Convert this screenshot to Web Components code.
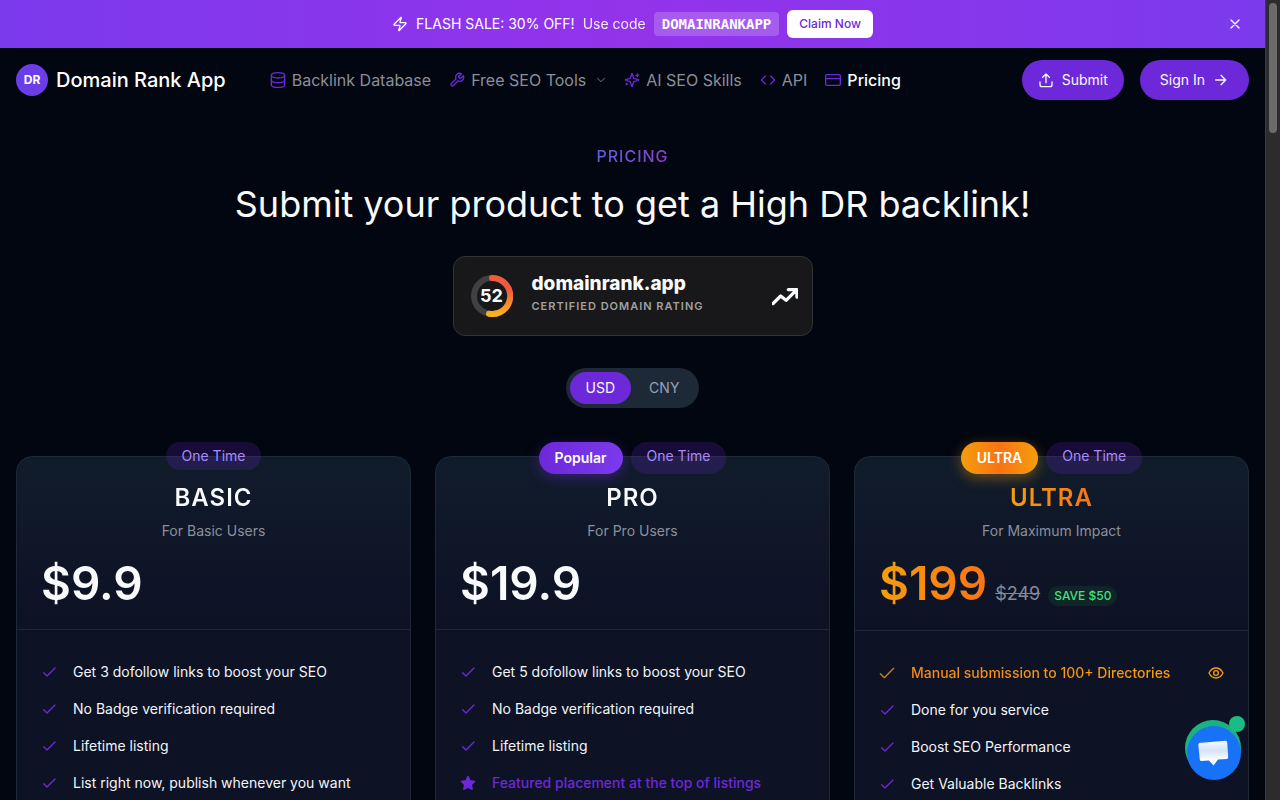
<!DOCTYPE html>
<html lang="en">
<head>
<meta charset="utf-8">
<meta name="viewport" content="width=device-width, initial-scale=1">
<title>Pricing - Domain Rank App</title>
<style>
    body {
        margin: 0;
        height: 100vh;
        overflow: hidden;
        background: #020610;
        color: #f8fafc;
        font-family: Inter, "Liberation Sans", sans-serif;
        font-size: 14px;
        line-height: 20px;
    }
</style>
</head>
<body>
<page-shell>
    <sale-banner code="DOMAINRANKAPP">FLASH SALE: 30% OFF!</sale-banner>
    <site-header></site-header>
    <main>
        <pricing-hero></pricing-hero>
        <plan-grid>
            <plan-card name="BASIC" tagline="For Basic Users" price="$9.9">
                <plan-feature>Get 3 dofollow links to boost your SEO</plan-feature>
                <plan-feature>No Badge verification required</plan-feature>
                <plan-feature>Lifetime listing</plan-feature>
                <plan-feature>List right now, publish whenever you want</plan-feature>
            </plan-card>
            <plan-card name="PRO" tagline="For Pro Users" price="$19.9" badge="Popular">
                <plan-feature>Get 5 dofollow links to boost your SEO</plan-feature>
                <plan-feature>No Badge verification required</plan-feature>
                <plan-feature>Lifetime listing</plan-feature>
                <plan-feature kind="star">Featured placement at the top of listings</plan-feature>
            </plan-card>
            <plan-card variant="ultra" name="ULTRA" tagline="For Maximum Impact" price="$199" was="$249" save="SAVE $50" badge="ULTRA">
                <plan-feature kind="gold">Manual submission to 100+ Directories</plan-feature>
                <plan-feature>Done for you service</plan-feature>
                <plan-feature>Boost SEO Performance</plan-feature>
                <plan-feature>Get Valuable Backlinks</plan-feature>
            </plan-card>
        </plan-grid>
    </main>
    <chat-bubble slot="overlay"></chat-bubble>
</page-shell>

<script>
const ICONS = {
    bolt: '<path d="M4 14a1 1 0 0 1-.78-1.63l9.9-10.2a.5.5 0 0 1 .86.46l-1.92 6.02A1 1 0 0 0 13 10h7a1 1 0 0 1 .78 1.63l-9.9 10.2a.5.5 0 0 1-.86-.46l1.92-6.02A1 1 0 0 0 11 14z"/>',
    close: '<path d="M18 6 6 18M6 6l12 12"/>',
    database: '<ellipse cx="12" cy="5" rx="10" ry="4"/><path d="M2 5v14a10 4 0 0 0 20 0V5"/><path d="M2 12a10 4 0 0 0 20 0"/>',
    wrench: '<path d="M14.7 6.3a1 1 0 0 0 0 1.4l1.6 1.6a1 1 0 0 0 1.4 0l3.77-3.77a6 6 0 0 1-7.94 7.94l-6.91 6.91a2.12 2.12 0 0 1-3-3l6.91-6.91a6 6 0 0 1 7.94-7.94z"/>',
    sparkles: '<path d="M9.94 15.5A2 2 0 0 0 8.5 14.06l-6.14-1.58a.5.5 0 0 1 0-.96L8.5 9.94A2 2 0 0 0 9.94 8.5l1.58-6.14a.5.5 0 0 1 .96 0l1.58 6.14a2 2 0 0 0 1.44 1.44l6.14 1.58a.5.5 0 0 1 0 .96l-6.14 1.58a2 2 0 0 0-1.44 1.44l-1.58 6.14a.5.5 0 0 1-.96 0z"/><path d="M20 3v4M22 5h-4M4 17v2M5 18H3"/>',
    code: '<path d="m16 18 6-6-6-6M8 6l-6 6 6 6"/>',
    card: '<rect x="1" y="4" width="22" height="16" rx="2"/><path d="M1 10h22"/>',
    chevron: '<path d="m4 8 8 8 8-8"/>',
    upload: '<path d="M3 15v4a3 3 0 0 0 3 3h12a3 3 0 0 0 3-3v-4M12 16V3M7 8l5-5 5 5"/>',
    arrow: '<path d="M4 12h15M12 5l7 7-7 7"/>',
    trend: '<path d="m1 19 7-7 5 4 9-9M15 6h8v7"/>',
    check: '<path d="m4 13 5 5L21 6"/>',
    tick: '<path d="m2 13 6 6L22 5"/>',
    star: '<path fill="currentColor" d="m12 2 3.1 6.6 7 .9-5.1 5 1.3 7.1-6.3-3.4-6.3 3.4L7 14.5l-5.1-5 7-.9z"/>',
    eye: '<path d="M1.500 12C4 7 7.500 4.500 12 4.500S20 7 22.500 12C20 17 16.500 19.500 12 19.500S4 17 1.500 12z"/><circle cx="12" cy="12" r="3.500"/>'
};

// small helper so that every element gets an open root with its own styles
function render(el, html) {
    el.attachShadow({ mode: 'open' }).innerHTML = html;
}

class UiIcon extends HTMLElement {
    connectedCallback() {
        const size = this.getAttribute('size') || 16;
        const weight = this.getAttribute('weight') || 2;
        render(this, `
            <style>
                :host { display: inline-flex; flex: none; }
                svg { display: block; fill: none; stroke: currentColor; stroke-linecap: round; stroke-linejoin: round; }
            </style>
            <svg width="${size}" height="${size}" viewBox="0 0 24 24" stroke-width="${weight}" aria-hidden="true">${ICONS[this.getAttribute('name')]}</svg>
        `);
    }
}

class PageShell extends HTMLElement {
    connectedCallback() {
        render(this, `
            <style>
                :host {
                    display: grid;
                    grid-template-columns: minmax(0, 1fr) 15px;
                    height: 100vh;
                }
                .view { overflow-y: auto; scrollbar-width: none; }
                .track {
                    box-sizing: border-box;
                    padding: 3px;
                    background: #2c2c2c;
                    border-left: 1px solid #3d3d3d;
                }
                .thumb {
                    width: 8px;
                    height: 130px;
                    border-radius: 4px;
                    background: #6b6b6b;
                }
            </style>
            <div class="view"><slot></slot></div>
            <div class="track"><div class="thumb"></div></div>
            <slot name="overlay"></slot>
        `);
    }
}

class SaleBanner extends HTMLElement {
    connectedCallback() {
        render(this, `
            <style>
                :host {
                    display: grid;
                    grid-template-columns: 28px 1fr 28px;
                    align-items: center;
                    height: 48px;
                    padding: 0 16px;
                    background: linear-gradient(90deg, #7c3aed, #9333ea 50%, #7c3aed);
                    color: #fff;
                }
                .offer { display: flex; grid-column: 2; align-items: center; justify-content: center; gap: 8px; }
                .use { opacity: 0.9; }
                code {
                    padding: 2px 8px;
                    border-radius: 4px;
                    background: rgba(255, 255, 255, 0.2);
                    font: bold 14px/20px "DejaVu Sans Mono", monospace;
                }
                button { border: 0; cursor: pointer; font: inherit; }
                .claim {
                    padding: 4px 12px;
                    border-radius: 6px;
                    background: #fff;
                    color: #6d28d9;
                    font-size: 12px;
                    font-weight: 500;
                }
                .close { display: flex; justify-content: center; padding: 6px; background: none; color: #fff; }
            </style>
            <div class="offer">
                <ui-icon name="bolt"></ui-icon>
                <span><slot></slot></span>
                <span class="use">Use code</span>
                <code>${this.getAttribute('code')}</code>
                <button class="claim" type="button">Claim Now</button>
            </div>
            <button class="close" type="button" aria-label="Close"><ui-icon name="close"></ui-icon></button>
        `);
    }
}

class NavLink extends HTMLElement {
    connectedCallback() {
        const menu = this.hasAttribute('menu') ? '<ui-icon class="more" name="chevron" size="10"></ui-icon>' : '';
        render(this, `
            <style>
                :host { display: block; }
                a {
                    display: flex;
                    align-items: center;
                    gap: 6px;
                    color: #8b8f99;
                    font-size: 16px;
                    line-height: 24px;
                    text-decoration: none;
                    white-space: nowrap;
                }
                :host([active]) a { color: #fff; font-weight: 500; }
                .lead { color: #6d28d9; }
                .more { margin-left: 4px; }
            </style>
            <a href="#"><ui-icon class="lead" name="${this.getAttribute('icon')}"></ui-icon><slot></slot>${menu}</a>
        `);
    }
}

class PillButton extends HTMLElement {
    connectedCallback() {
        render(this, `
            <style>
                :host { display: block; }
                button {
                    display: flex;
                    align-items: center;
                    gap: 8px;
                    height: 40px;
                    padding: 0 16px;
                    border: 0;
                    border-radius: 20px;
                    background: #6d28d9;
                    color: #f8fafc;
                    font: inherit;
                    white-space: nowrap;
                    cursor: pointer;
                }
                :host([wide]) button { padding: 0 20px; }
            </style>
            <button type="button"><slot></slot></button>
        `);
    }
}

class SiteHeader extends HTMLElement {
    connectedCallback() {
        render(this, `
            <style>
                :host {
                    display: flex;
                    align-items: center;
                    height: 64px;
                    padding: 0 16px;
                }
                .brand {
                    display: flex;
                    align-items: center;
                    gap: 8px;
                    color: #fff;
                    font-size: 20px;
                    font-weight: 500;
                    line-height: 28px;
                    text-decoration: none;
                    white-space: nowrap;
                }
                .mark {
                    width: 32px;
                    border-radius: 50%;
                    background: #6a3de8;
                    font-size: 12px;
                    font-weight: 700;
                    line-height: 32px;
                    text-align: center;
                }
                nav { display: flex; gap: 18px; margin-left: 44px; }
                .actions { display: flex; gap: 16px; margin-left: auto; }
            </style>
            <a class="brand" href="#"><span class="mark">DR</span><span>Domain Rank App</span></a>
            <nav>
                <nav-link icon="database">Backlink Database</nav-link>
                <nav-link icon="wrench" menu>Free SEO Tools</nav-link>
                <nav-link icon="sparkles">AI SEO Skills</nav-link>
                <nav-link icon="code">API</nav-link>
                <nav-link icon="card" active>Pricing</nav-link>
            </nav>
            <div class="actions">
                <pill-button><ui-icon name="upload"></ui-icon><span>Submit</span></pill-button>
                <pill-button wide><span>Sign In</span><ui-icon name="arrow"></ui-icon></pill-button>
            </div>
        `);
    }
}

class RatingBadge extends HTMLElement {
    connectedCallback() {
        render(this, `
            <style>
                :host {
                    display: flex;
                    align-items: center;
                    gap: 19px;
                    box-sizing: border-box;
                    width: 360px;
                    height: 80px;
                    padding: 0 14px 0 17px;
                    border: 1px solid #333;
                    border-radius: 12px;
                    background: #18181a;
                }
                .ring { display: grid; place-items: center; }
                .ring > * { grid-area: 1 / 1; }
                .score { font-size: 18px; font-weight: 700; }
                .text { flex: 1; padding-bottom: 4px; text-align: left; }
                .domain { font-size: 19px; font-weight: 800; line-height: 24px; }
                .label { color: #a1a1a1; font-size: 11px; font-weight: 600; letter-spacing: 1px; line-height: 20px; }
            </style>
            <div class="ring">
                <svg width="42" height="42" viewBox="0 0 42 42" fill="none" stroke-width="6" aria-hidden="true">
                    <defs>
                        <linearGradient id="heat" x1="0" y1="0" x2="0" y2="1">
                            <stop offset="0" stop-color="#ef5a3c"/>
                            <stop offset="0.3" stop-color="#f0593e"/>
                            <stop offset="1" stop-color="#fbb11c"/>
                        </linearGradient>
                    </defs>
                    <circle cx="21" cy="21" r="18" stroke="#404040"/>
                    <path d="M21 3a18 18 0 1 1-3 35.700" stroke="url(#heat)" stroke-linecap="round"/>
                </svg>
                <span class="score">52</span>
            </div>
            <div class="text">
                <div class="domain">domainrank.app</div>
                <div class="label">CERTIFIED DOMAIN RATING</div>
            </div>
            <ui-icon name="trend" size="26" weight="3"></ui-icon>
        `);
    }
}

class CurrencySwitch extends HTMLElement {
    connectedCallback() {
        render(this, `
            <style>
                :host {
                    display: flex;
                    gap: 2px;
                    padding: 4px;
                    border-radius: 20px;
                    background: #1e2937;
                }
                button {
                    height: 32px;
                    padding: 0 16px;
                    border: 0;
                    border-radius: 16px;
                    background: none;
                    color: #94a3b8;
                    font: inherit;
                    cursor: pointer;
                }
                button[aria-pressed="true"] { background: #6d28d9; color: #f8fafc; }
            </style>
            <button type="button" aria-pressed="true">USD</button>
            <button type="button" aria-pressed="false">CNY</button>
        `);
    }
}

class PricingHero extends HTMLElement {
    connectedCallback() {
        render(this, `
            <style>
                :host {
                    display: flex;
                    flex-direction: column;
                    align-items: center;
                    padding: 32px 16px 48px;
                    text-align: center;
                }
                h2, h1 { margin: 0; }
                h2 {
                    background: linear-gradient(90deg, #5f5fe0, #8b3fc8);
                    -webkit-background-clip: text;
                    background-clip: text;
                    color: transparent;
                    font-size: 16px;
                    font-weight: 500;
                    letter-spacing: 1px;
                    line-height: 24px;
                }
                h1 { margin-top: 16px; font-size: 36px; font-weight: 400; line-height: 40px; }
                rating-badge, currency-switch { margin-top: 32px; }
            </style>
            <h2>PRICING</h2>
            <h1>Submit your product to get a High DR backlink!</h1>
            <rating-badge></rating-badge>
            <currency-switch></currency-switch>
        `);
    }
}

class PlanGrid extends HTMLElement {
    connectedCallback() {
        render(this, `
            <style>
                :host {
                    display: grid;
                    grid-template-columns: repeat(3, minmax(0, 1fr));
                    gap: 24px;
                    padding: 0 16px 48px;
                }
            </style>
            <slot></slot>
        `);
    }
}

class PlanCard extends HTMLElement {
    connectedCallback() {
        const get = (key) => this.getAttribute(key);
        const badge = get('badge') ? `<span class="badge">${get('badge')}</span>` : '';
        const deal = get('was') ? `<s>${get('was')}</s><span class="save">${get('save')}</span>` : '';
        render(this, `
            <style>
                :host {
                    --accent: linear-gradient(90deg, #6d28d9, #7c3aed);
                    --glow: rgba(109, 40, 217, 0.4);
                    --title: linear-gradient(#f8fafc, #f8fafc);
                    display: block;
                    position: relative;
                    border: 1px solid #1e2938;
                    border-radius: 16px;
                    background: linear-gradient(#111c2b, #0d1225 160px);
                }
                :host([variant="ultra"]) {
                    --accent: linear-gradient(90deg, #f59e0b, #f97316 50%, #f59e0b);
                    --glow: rgba(245, 158, 11, 0.4);
                    --title: linear-gradient(90deg, #f59e0b, #f97316);
                }
                /* pills straddle the top edge of the card */
                .pills {
                    position: absolute;
                    top: -15px;
                    left: 0;
                    right: 0;
                    display: flex;
                    justify-content: center;
                    gap: 8px;
                }
                .term, .badge { border-radius: 16px; }
                .term { padding: 4px 16px; background: rgba(109, 40, 217, 0.2); color: #a78bfa; }
                .badge {
                    padding: 6px 16px;
                    background: var(--accent);
                    box-shadow: 0 4px 14px var(--glow);
                    color: #fff;
                    font-weight: 600;
                }
                header { padding: 25px 24px 14px; border-bottom: 1px solid #1e2938; text-align: center; }
                :host([variant="ultra"]) header { padding-bottom: 15px; }
                h3, .price {
                    background: var(--title);
                    -webkit-background-clip: text;
                    background-clip: text;
                    color: transparent;
                }
                h3 { width: fit-content; margin: 0 auto; font-size: 24px; font-weight: 600; letter-spacing: 1px; line-height: 32px; }
                p { margin: 7px 0 0; color: #8b909c; }
                .cost { display: flex; align-items: baseline; gap: 8px; margin-top: 10px; }
                .price { font-size: 46px; font-weight: 600; line-height: 64px; }
                s { color: #848996; font-size: 18px; }
                .save {
                    padding: 0 6px;
                    border-radius: 10px;
                    background: rgba(20, 83, 45, 0.3);
                    color: #4ade80;
                    font-size: 12px;
                    font-weight: 500;
                }
                .list { display: grid; gap: 16px; padding: 31px 24px; }
            </style>
            <div class="pills">${badge}<span class="term">One Time</span></div>
            <header>
                <h3>${get('name')}</h3>
                <p>${get('tagline')}</p>
                <div class="cost"><span class="price">${get('price')}</span>${deal}</div>
            </header>
            <div class="list" role="list"><slot></slot></div>
        `);
    }
}

const MARKS = { star: 'star', gold: 'tick' };

class PlanFeature extends HTMLElement {
    connectedCallback() {
        const kind = this.getAttribute('kind');
        const eye = kind === 'gold' ? '<button type="button" aria-label="Preview"><ui-icon name="eye"></ui-icon></button>' : '';
        this.setAttribute('role', 'listitem');
        render(this, `
            <style>
                :host { display: flex; align-items: center; gap: 16px; line-height: 21px; color: #f1f5f9; }
                .mark { color: #6d28d9; }
                .text { flex: 1; }
                :host([kind]) { font-weight: 500; }
                :host([kind="star"]) .text { color: #6d28d9; }
                :host([kind="gold"]) .text {
                    flex: none;
                    background: linear-gradient(90deg, #f98a16, #f59e0b);
                    -webkit-background-clip: text;
                    background-clip: text;
                    color: transparent;
                }
                :host([kind="gold"]) .mark { color: #c9821a; }
                button { display: flex; margin-left: auto; padding: 0; border: 0; background: none; color: #f59e0b; cursor: pointer; }
            </style>
            <ui-icon class="mark" name="${MARKS[kind] || 'check'}"></ui-icon>
            <span class="text"><slot></slot></span>${eye}
        `);
    }
}

class ChatBubble extends HTMLElement {
    connectedCallback() {
        render(this, `
            <style>
                :host { position: fixed; right: 35px; bottom: 20px; }
                button { display: block; padding: 0; border: 0; background: none; cursor: pointer; }
                svg { display: block; }
            </style>
            <button type="button" aria-label="Open chat">
                <svg width="60" height="64" viewBox="0 0 60 64" aria-hidden="true">
                    <defs>
                        <linearGradient id="paper" x1="0" y1="0" x2="0" y2="1">
                            <stop offset="0" stop-color="#f4f8ff"/>
                            <stop offset="0.4" stop-color="#d6e3fa"/>
                            <stop offset="0.8" stop-color="#fff"/>
                        </linearGradient>
                    </defs>
                    <circle cx="28" cy="32" r="28" fill="#1ab283"/>
                    <circle cx="29" cy="37" r="27" fill="#1872f6"/>
                    <path d="m14.500 27 27-2.200q1.500 0 1.700 1.500l1 15q0 1.500-1.500 1.700l-8.700.500-4.500 6-4.500-5-7.500.500q-1.600 0-1.700-1.500l-1.500-14.500q0-1.500 1.200-2z" transform="translate(-1)" fill="url(#paper)"/>
                    <circle cx="52" cy="8" r="8" fill="#1bbb84"/>
                </svg>
            </button>
        `);
    }
}

customElements.define('ui-icon', UiIcon);
customElements.define('page-shell', PageShell);
customElements.define('sale-banner', SaleBanner);
customElements.define('nav-link', NavLink);
customElements.define('pill-button', PillButton);
customElements.define('site-header', SiteHeader);
customElements.define('rating-badge', RatingBadge);
customElements.define('currency-switch', CurrencySwitch);
customElements.define('pricing-hero', PricingHero);
customElements.define('plan-grid', PlanGrid);
customElements.define('plan-card', PlanCard);
customElements.define('plan-feature', PlanFeature);
customElements.define('chat-bubble', ChatBubble);
</script>
</body>
</html>
